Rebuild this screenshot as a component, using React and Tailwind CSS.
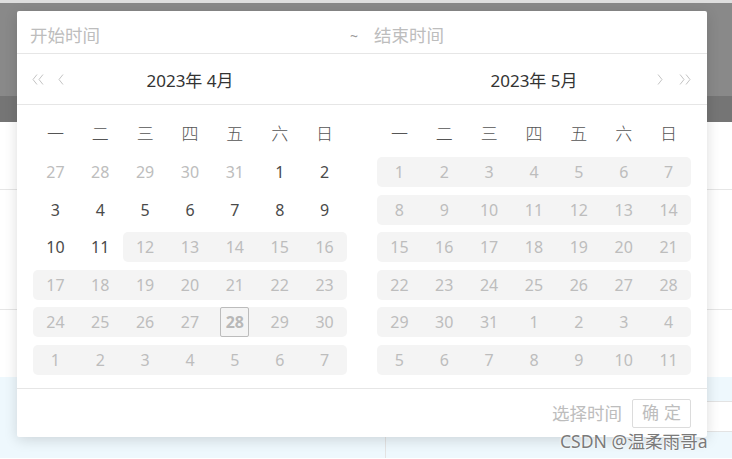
import React from "react";

const FONT = { fontFamily: '"Noto Sans", "Noto Sans CJK SC", sans-serif' };

function Chev({ right }) {
  return (
    <svg width="6" height="11" viewBox="0 0 6 11" className={right ? "rotate-180" : ""}>
      <path d="M5 0.5 L1 5.5 L5 10.5" stroke="#c4c4c4" strokeWidth="1" fill="none" />
    </svg>
  );
}
function DChev({ right }) {
  return (
    <svg width="12" height="11" viewBox="0 0 12 11" className={right ? "rotate-180" : ""}>
      <path d="M5 0.5 L1 5.5 L5 10.5 M11 0.5 L7 5.5 L11 10.5" stroke="#c4c4c4" strokeWidth="1" fill="none" />
    </svg>
  );
}

const WEEK = ["一", "二", "三", "四", "五", "六", "日"];

// each cell: [label, disabled, inRange, boxed]
const leftRows = [
  [[27, 1, 0], [28, 1, 0], [29, 1, 0], [30, 1, 0], [31, 1, 0], [1, 0, 0], [2, 0, 0]],
  [[3, 0, 0], [4, 0, 0], [5, 0, 0], [6, 0, 0], [7, 0, 0], [8, 0, 0], [9, 0, 0]],
  [[10, 0, 0], [11, 0, 0], [12, 1, 1], [13, 1, 1], [14, 1, 1], [15, 1, 1], [16, 1, 1]],
  [17, 18, 19, 20, 21, 22, 23].map((n) => [n, 1, 1]),
  [24, 25, 26, 27, 28, 29, 30].map((n) => [n, 1, 1, n === 28 ? 1 : 0]),
  [1, 2, 3, 4, 5, 6, 7].map((n) => [n, 1, 1]),
];
const rightRows = [
  [1, 2, 3, 4, 5, 6, 7],
  [8, 9, 10, 11, 12, 13, 14],
  [15, 16, 17, 18, 19, 20, 21],
  [22, 23, 24, 25, 26, 27, 28],
  [29, 30, 31, 1, 2, 3, 4],
  [5, 6, 7, 8, 9, 10, 11],
].map((r) => r.map((n) => [n, 1, 1]));

function Panel({ rows }) {
  return (
    <div className="w-[314px]">
      <div className="grid grid-cols-7 h-[30px] mt-[13px] items-center text-[17px] text-[#555] font-light">
        {WEEK.map((w) => (
          <div key={w} className="text-center leading-none">{w}</div>
        ))}
      </div>
      <div className="flex flex-col gap-[7.6px] mt-[9px]">
        {rows.map((row, ri) => (
          <div key={ri} className="grid grid-cols-7 h-[30px]">
            {row.map(([n, dis, inR, boxed], ci) => {
              const prev = ci > 0 && row[ci - 1][2];
              const next = ci < 6 && row[ci + 1][2];
              return (
                <div
                  key={ci}
                  className={
                    "flex items-center justify-center text-[16px] " +
                    (dis ? "text-[#bdbdbd] " : "text-[#4a4a4a] ") +
                    (inR ? "bg-[#f4f4f4] " : "") +
                    (inR && !prev ? "rounded-l-[5px] " : "") +
                    (inR && !next ? "rounded-r-[5px] " : "")
                  }
                >
                  {boxed ? (
                    <span className="w-[29px] h-[30px] flex items-center justify-center border border-[#bcbcbc] rounded-[2px] font-bold text-[#b8b8b8]">
                      {n}
                    </span>
                  ) : (
                    <span>{n}</span>
                  )}
                </div>
              );
            })}
          </div>
        ))}
      </div>
    </div>
  );
}

export default function App() {
  return (
    <div className="relative w-[732px] h-[459px] overflow-hidden bg-white" style={FONT}>
      {/* background page */}
      <div className="h-[3px] bg-[#dedede]" />
      <div className="h-[93px] bg-[#898989]" />
      <div className="h-[26px] bg-[#757575]" />
      <div className="h-[68px] border-b border-[#e6e6e6]" />
      <div className="h-[120px] border-b border-[#e6e6e6]" />
      <div className="h-[67px]" />
      <div className="grid grid-cols-[385px_1fr] h-[81px]">
        <div className="bg-[#eef8fd]" />
        <div className="flex flex-col">
          <div className="h-[25px] bg-[#eef8fd] border-b border-[#e3e3e3]" />
          <div className="h-[30px] bg-white border-b border-[#e3e3e3]" />
          <div className="flex-1 bg-[#eef8fd] border-l border-[#e3e3e3]" />
        </div>
      </div>

      {/* popup */}
      <div className="absolute left-[17px] top-[11px] w-[690px] h-[426px] bg-white rounded-[2px] shadow-[0_3px_14px_rgba(0,0,0,0.14)] flex flex-col">
        <div className="h-[43px] border-b border-[#e6e6e6] flex items-center pt-[6px] text-[17.5px] text-[#bdbdbd]">
          <span className="ml-[13px] w-[320px]">开始时间</span>
          <span className="w-[24px] text-[#999] text-[14px]">~</span>
          <span>结束时间</span>
        </div>
        <div className="h-[51px] border-b border-[#e6e6e6] flex px-[16px] gap-[30px]">
          <div className="w-[314px] relative flex items-center justify-center pt-[3px] text-[17px] text-[#333]">
            <div className="absolute left-[-1px] top-[20px] flex items-center gap-[14px]">
              <DChev />
              <Chev />
            </div>
            <span>2023年 4月</span>
          </div>
          <div className="w-[314px] relative flex items-center justify-center pt-[3px] text-[17px] text-[#333]">
            <span>2023年 5月</span>
            <div className="absolute left-[280px] top-[20px] flex items-center gap-[16px]">
              <Chev right />
              <DChev right />
            </div>
          </div>
        </div>
        <div className="flex gap-[30px] px-[16px] h-[283px]">
          <Panel rows={leftRows} />
          <Panel rows={rightRows} />
        </div>
        <div className="flex-1 border-t border-[#e6e6e6] flex items-center justify-end pr-[16px] gap-[10px]">
          <span className="text-[17.5px] text-[#bdbdbd]">选择时间</span>
          <span className="w-[59px] h-[29px] border border-[#dcdcdc] rounded-[2px] flex items-center justify-center text-[17px] text-[#bdbdbd] tracking-[5px] pl-[5px]">
            确定
          </span>
        </div>
      </div>

      {/* watermark */}
      <div className="absolute left-[560px] top-[428px] text-[17.6px] text-[#7a7a7a] [text-shadow:0_0_2px_#fff,0_0_2px_#fff]">
        CSDN @温柔雨哥a
      </div>
    </div>
  );
}
